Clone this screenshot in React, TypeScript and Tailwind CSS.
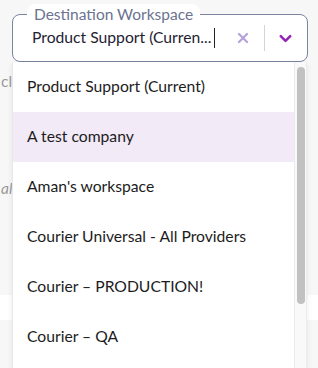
import { X, ChevronDown } from "lucide-react";

const workspaces = [
  "Product Support (Current)",
  "A test company",
  "Aman's workspace",
  "Courier Universal - All Providers",
  "Courier – PRODUCTION!",
  "Courier – QA",
];

export default function App() {
  return (
    <div
      className="relative w-[318px] h-[368px] overflow-hidden bg-[#f7f7f8]"
      style={{ fontFamily: "Lato, 'Noto Sans', sans-serif" }}
    >
      {/* page behind the menu */}
      <div className="flex flex-col pt-[14px] pl-[12px] pr-[10px]">
        <div className="relative h-[48px] rounded-[8px] border border-[#7c84a0] bg-white flex items-center pl-[19px] pr-[12px]">
          <span className="absolute -top-[11px] left-[14px] px-[7px] h-[20px] rounded-[8px] bg-white text-[15.5px] leading-[20px] text-[#6b7391]">
            Destination Workspace
          </span>
          <span className="text-[15.7px] text-[#1f2233] whitespace-nowrap">
            Product Support (Curren...
          </span>
          <span className="ml-[3px] w-px h-[20px] bg-[#222]" />
          <div className="ml-auto flex items-center">
            <X size={16} strokeWidth={3.4} className="text-[#b5a3dc]" />
            <span className="ml-[13px] mr-[11px] w-px h-[26px] bg-[#d4d4d8]" />
            <ChevronDown size={19} strokeWidth={3.2} className="text-[#9424b8]" />
          </div>
        </div>
        <div className="-ml-[12px] -mr-[10px] mt-[4px] h-[229px] flex flex-col text-[15.5px] text-[#9a9a9a]">
          <span className="pt-[4px] pl-[1px]">cl</span>
          <span className="mt-[84px] pl-[1px] italic">al</span>
        </div>
        <div className="-ml-[12px] -mr-[10px] h-[25px] bg-white" />
      </div>

      {/* open menu */}
      <div className="absolute left-[12px] top-[62px] w-[295px] h-[310px] bg-white border-l border-[#e8e8e8] shadow-[0_2px_6px_rgba(0,0,0,0.08)] flex">
        <ul className="flex-1 flex flex-col">
          {workspaces.map((w, i) => (
            <li
              key={w}
              className={`h-[50px] shrink-0 flex items-center pl-[14px] text-[15.7px] text-[#1c1c1c] ${
                i === 1 ? "bg-[#f2eaf7]" : ""
              }`}
            >
              {w}
            </li>
          ))}
        </ul>
        <div className="w-[13px] bg-[#f9f9f9] border-l border-[#ececec] border-r pt-[5px] flex justify-center">
          <div className="w-[8px] h-[237px] rounded-full bg-[#c1c1c1]" />
        </div>
      </div>
    </div>
  );
}
